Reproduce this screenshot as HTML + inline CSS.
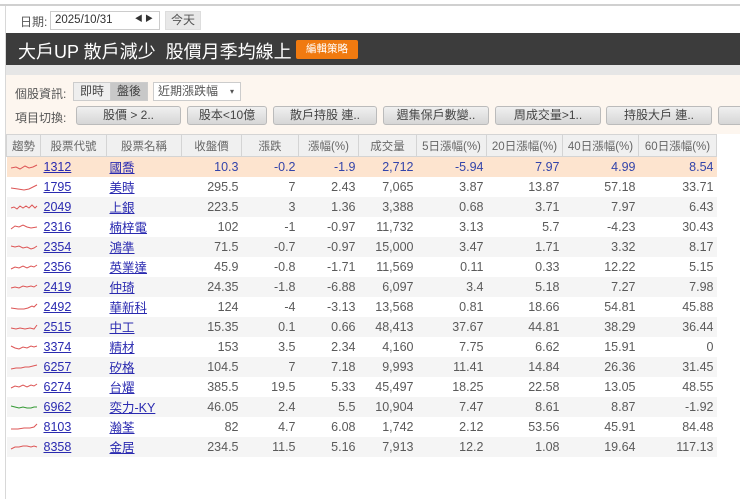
<!DOCTYPE html>
<html><head><meta charset="utf-8"><style>
*{margin:0;padding:0;box-sizing:border-box}
body{width:740px;height:499px;background:#fff;font-family:"Liberation Sans","Noto Sans CJK TC",sans-serif;position:relative;overflow:hidden;font-size:12px;color:#555}
.a{position:absolute}
.topline{left:0;top:4px;width:740px;height:2px;background:#d0d0d0}
.leftline{left:5px;top:6px;width:1px;height:493px;background:#d8d8d8}
.date{left:20px;top:13px;color:#555;font-size:12px}
.inp{left:50px;top:11px;width:110px;height:19px;border:1px solid #ccc;background:#fff;font-size:11.5px;padding:2px 4px;color:#333}
.today{left:165px;top:11px;width:36px;height:19px;background:#e8e8e8;border:1px solid #ddd;text-align:center;font-size:12px;line-height:17px;color:#555}
.bar{left:6px;top:33px;width:734px;height:32px;background:#3c3c3c}
.title{left:18px;top:38px;color:#fff;font-size:18px;white-space:nowrap}
.edit{left:296px;top:40px;width:62px;height:19px;background:#f07a10;color:#fff;font-size:10.5px;text-align:center;line-height:19px;border-radius:2px}
.strip{left:6px;top:65px;width:734px;height:10px;background:#e6e6e6}
.cream{left:6px;top:75px;width:734px;height:59px;background:#fdf6ef}
.lbl{font-size:12px;color:#555}
.seg{top:82px;height:19px;border:1px solid #ccc;font-size:12px;line-height:17px;text-align:center;color:#444}
.sel{left:153px;top:82px;width:88px;height:19px;border:1px solid #ccc;background:#fff;font-size:12px;line-height:17px;padding-left:4px;color:#555}
.btn{top:106px;height:19px;border:1px solid #bbb;border-radius:3px;background:linear-gradient(#f0f0f0,#d6d6d6);font-size:12px;line-height:17px;text-align:center;color:#444;white-space:nowrap;overflow:hidden}
table{position:absolute;left:6px;top:134px;border-collapse:collapse;table-layout:fixed;width:710px}
th{height:22px;background:#f0f0f0;border:1px solid #d4d4d4;font-weight:normal;font-size:11.5px;color:#666}
td{height:20px;font-size:12.5px;text-align:right;padding-right:3px;white-space:nowrap;color:#5a5a5a}
tr.g td{background:#f5f5f5}
tr.h td{background:#fde4cf;color:#3344aa}
td.l{text-align:left;padding-left:3px}
td a{color:#2a2ab0;text-decoration:underline}
td svg{display:block}
</style></head><body>
<div class="a topline"></div><div class="a leftline"></div>
<div class="a date">日期:</div>
<div class="a inp">2025/10/31<span style="position:absolute;right:6px;top:1px;font-size:8px">◀ ▶</span></div>
<div class="a today">今天</div>
<div class="a bar"></div>
<div class="a title">大戶UP 散戶減少&nbsp; 股價月季均線上</div>
<div class="a edit">編輯策略</div>
<div class="a strip"></div>
<div class="a cream"></div>
<div class="a lbl" style="left:15px;top:85px">個股資訊:</div>
<div class="a seg" style="left:73px;width:38px;background:#eee">即時</div>
<div class="a seg" style="left:110px;width:38px;background:#c8c8c8">盤後</div>
<div class="a sel">近期漲跌幅 <span style="position:absolute;right:6px;font-size:8px">▾</span></div>
<div class="a lbl" style="left:15px;top:109px">項目切換:</div>
<div class="a btn" style="left:76px;width:105px">股價 &gt; 2..</div>
<div class="a btn" style="left:187px;width:80px">股本&lt;10億</div>
<div class="a btn" style="left:273px;width:104px">散戶持股 連..</div>
<div class="a btn" style="left:383px;width:106px">週集保戶數變..</div>
<div class="a btn" style="left:495px;width:106px">周成交量&gt;1..</div>
<div class="a btn" style="left:606px;width:106px">持股大戶 連..</div>
<div class="a btn" style="left:718px;width:40px"></div>
<table>
<colgroup><col style="width:34px"><col style="width:66px"><col style="width:75px"><col style="width:60px"><col style="width:57px"><col style="width:60px"><col style="width:58px"><col style="width:70px"><col style="width:76px"><col style="width:76px"><col style="width:78px"></colgroup>
<tr><th>趨勢</th><th>股票代號</th><th>股票名稱</th><th>收盤價</th><th>漲跌</th><th>漲幅(%)</th><th>成交量</th><th>5日漲幅(%)</th><th>20日漲幅(%)</th><th>40日漲幅(%)</th><th>60日漲幅(%)</th></tr>
<tr class="h"><td class="l"><svg width="28" height="10"><path d="M1 6 L6 5 L10 7 L15 4 L19 6 L23 5 L27 3" stroke="#d55" fill="none"/></svg></td><td class="l"><a>1312</a></td><td class="l"><a>國喬</a></td><td>10.3</td><td>-0.2</td><td>-1.9</td><td>2,712</td><td>-5.94</td><td>7.97</td><td>4.99</td><td>8.54</td></tr>
<tr><td class="l"><svg width="28" height="10"><path d="M1 6 L8 7 L14 8 L19 7 L23 5 L27 3" stroke="#d55" fill="none"/></svg></td><td class="l"><a>1795</a></td><td class="l"><a>美時</a></td><td>295.5</td><td>7</td><td>2.43</td><td>7,065</td><td>3.87</td><td>13.87</td><td>57.18</td><td>33.71</td></tr>
<tr class="g"><td class="l"><svg width="28" height="10"><path d="M1 6 L4 5 L7 7 L10 4 L13 6 L16 4 L19 6 L22 3 L25 6 L27 4" stroke="#d55" fill="none"/></svg></td><td class="l"><a>2049</a></td><td class="l"><a>上銀</a></td><td>223.5</td><td>3</td><td>1.36</td><td>3,388</td><td>0.68</td><td>3.71</td><td>7.97</td><td>6.43</td></tr>
<tr><td class="l"><svg width="28" height="10"><path d="M1 7 L5 4 L9 5 L13 3 L17 5 L21 6 L27 5" stroke="#d55" fill="none"/></svg></td><td class="l"><a>2316</a></td><td class="l"><a>楠梓電</a></td><td>102</td><td>-1</td><td>-0.97</td><td>11,732</td><td>3.13</td><td>5.7</td><td>-4.23</td><td>30.43</td></tr>
<tr class="g"><td class="l"><svg width="28" height="10"><path d="M1 4 L5 5 L9 4 L13 6 L17 5 L21 7 L24 6 L27 4" stroke="#d55" fill="none"/></svg></td><td class="l"><a>2354</a></td><td class="l"><a>鴻準</a></td><td>71.5</td><td>-0.7</td><td>-0.97</td><td>15,000</td><td>3.47</td><td>1.71</td><td>3.32</td><td>8.17</td></tr>
<tr><td class="l"><svg width="28" height="10"><path d="M1 7 L5 5 L9 6 L13 4 L17 6 L21 4 L24 5 L27 3" stroke="#d55" fill="none"/></svg></td><td class="l"><a>2356</a></td><td class="l"><a>英業達</a></td><td>45.9</td><td>-0.8</td><td>-1.71</td><td>11,569</td><td>0.11</td><td>0.33</td><td>12.22</td><td>5.15</td></tr>
<tr class="g"><td class="l"><svg width="28" height="10"><path d="M1 6 L5 5 L9 6 L13 4 L17 5 L21 4 L24 5 L27 3" stroke="#d55" fill="none"/></svg></td><td class="l"><a>2419</a></td><td class="l"><a>仲琦</a></td><td>24.35</td><td>-1.8</td><td>-6.88</td><td>6,097</td><td>3.4</td><td>5.18</td><td>7.27</td><td>7.98</td></tr>
<tr><td class="l"><svg width="28" height="10"><path d="M1 6 L8 7 L14 7 L18 6 L22 4 L24 5 L27 2" stroke="#d55" fill="none"/></svg></td><td class="l"><a>2492</a></td><td class="l"><a>華新科</a></td><td>124</td><td>-4</td><td>-3.13</td><td>13,568</td><td>0.81</td><td>18.66</td><td>54.81</td><td>45.88</td></tr>
<tr class="g"><td class="l"><svg width="28" height="10"><path d="M1 6 L6 7 L10 6 L15 7 L20 6 L24 7 L27 3" stroke="#d55" fill="none"/></svg></td><td class="l"><a>2515</a></td><td class="l"><a>中工</a></td><td>15.35</td><td>0.1</td><td>0.66</td><td>48,413</td><td>37.67</td><td>44.81</td><td>38.29</td><td>36.44</td></tr>
<tr><td class="l"><svg width="28" height="10"><path d="M1 4 L5 6 L9 7 L13 5 L17 6 L21 4 L24 5 L27 4" stroke="#d55" fill="none"/></svg></td><td class="l"><a>3374</a></td><td class="l"><a>精材</a></td><td>153</td><td>3.5</td><td>2.34</td><td>4,160</td><td>7.75</td><td>6.62</td><td>15.91</td><td>0</td></tr>
<tr class="g"><td class="l"><svg width="28" height="10"><path d="M1 7 L6 6 L11 6 L15 5 L19 5 L23 4 L27 3" stroke="#d55" fill="none"/></svg></td><td class="l"><a>6257</a></td><td class="l"><a>矽格</a></td><td>104.5</td><td>7</td><td>7.18</td><td>9,993</td><td>11.41</td><td>14.84</td><td>26.36</td><td>31.45</td></tr>
<tr><td class="l"><svg width="28" height="10"><path d="M1 6 L5 4 L9 5 L13 3 L17 5 L21 3 L24 4 L27 2" stroke="#d55" fill="none"/></svg></td><td class="l"><a>6274</a></td><td class="l"><a>台燿</a></td><td>385.5</td><td>19.5</td><td>5.33</td><td>45,497</td><td>18.25</td><td>22.58</td><td>13.05</td><td>48.55</td></tr>
<tr class="g"><td class="l"><svg width="28" height="10"><path d="M1 4 L5 5 L9 6 L13 5 L17 6 L21 6 L24 5 L27 5" stroke="#393" fill="none"/></svg></td><td class="l"><a>6962</a></td><td class="l"><a>奕力-KY</a></td><td>46.05</td><td>2.4</td><td>5.5</td><td>10,904</td><td>7.47</td><td>8.61</td><td>8.87</td><td>-1.92</td></tr>
<tr><td class="l"><svg width="28" height="10"><path d="M1 7 L8 7 L14 6 L20 6 L24 5 L27 2" stroke="#d55" fill="none"/></svg></td><td class="l"><a>8103</a></td><td class="l"><a>瀚荃</a></td><td>82</td><td>4.7</td><td>6.08</td><td>1,742</td><td>2.12</td><td>53.56</td><td>45.91</td><td>84.48</td></tr>
<tr class="g"><td class="l"><svg width="28" height="10"><path d="M1 7 L5 5 L9 5 L13 4 L17 4 L21 5 L24 4 L27 5" stroke="#d55" fill="none"/></svg></td><td class="l"><a>8358</a></td><td class="l"><a>金居</a></td><td>234.5</td><td>11.5</td><td>5.16</td><td>7,913</td><td>12.2</td><td>1.08</td><td>19.64</td><td>117.13</td></tr>
</table>
</body></html>
